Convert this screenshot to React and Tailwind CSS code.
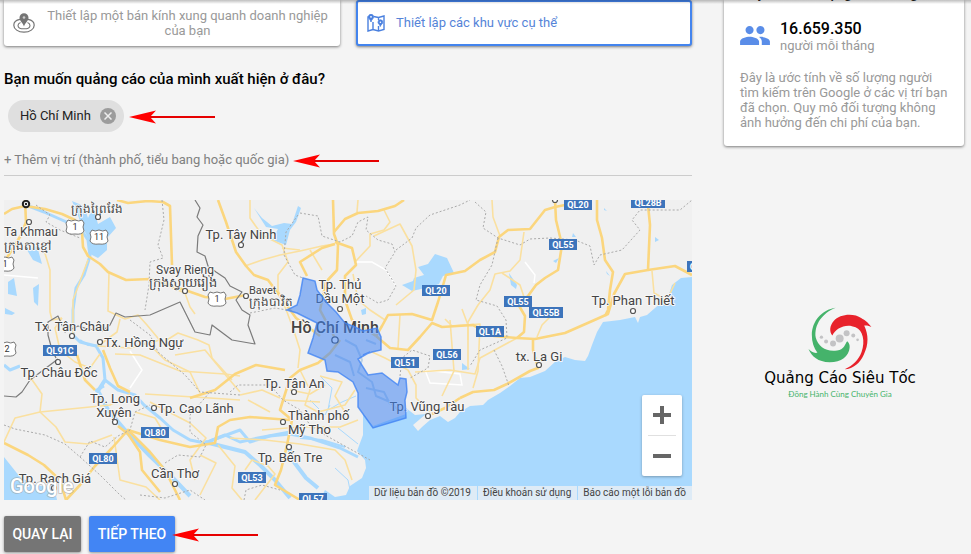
import React from 'react';

const highways = [
  'M4 214 L12 209 L25 206 L45 209 L62 214 L75 220 L82 232 L83 247 L88 256 L100 264 L108 272 L126 280 L150 279 L166 284 L185 290 L205 297 L225 299 L246 295',
  'M25 200 L26 222 L21 235 L12 250 L4 262',
  'M117 200 L128 203 L148 201 L163 202 L170 206 L172 265',
  'M218 200 L226 222 L233 243 L236 252 L246 266 L254 275 L268 280 L280 296 L296 318 L320 336',
  'M333 200 L334 234 L338 245 L337 270 L326 282 L320 310 L336 340',
  'M334 232 L345 219 L358 213 L378 211 L395 206 L404 200',
  'M335 242 L352 248 L356 265 L345 276 L345 300 L352 320 L376 336',
  'M307 276 L300 262 L322 248 L335 244',
  'M376 336 L382 326 L388 315 L412 314 L432 320 L438 302 L444 282 L446 275 L465 271 L480 260 L495 252 L499 237 L508 230 L530 229 L545 210 L555 207 L580 202',
  'M555 200 L556 220 L562 245 L558 270 L545 278 L536 285 L528 296 L518 304 L525 316 L524 332 L517 338',
  'M597 200 L597 220 L602 238 L605 260 L613 272 L610 290 L608 310 L605 316',
  'M648 205 L650 225 L648 270 L625 274 L614 294 L608 314 L590 322 L565 333 L535 339 L517 338 L494 336 L473 325 L442 327 L432 323 L420 337 L408 350 L390 348 L376 336',
  'M648 270 L675 266 L692 275',
  'M340 340 L330 353 L318 363 L300 370 L290 378 L280 410 L292 420 L287 445 L281 470 L275 485 L300 500',
  'M285 370 L256 365 L235 374 L215 390 L190 398',
  'M4 443 L28 455 L44 465 L60 480 L66 500 L80 485 L95 466 L112 448 L128 430 L150 452 L165 470 L180 500',
  'M118 426 L128 434 L140 452 L142 470 L160 492',
  'M290 420 L250 417 L230 420 L218 427 L215 443 L190 447 L160 440 L128 430',
  'M460 398 L473 392 L494 390 L507 384 L530 371 L538 368 L533 350 L533 338',
  'M460 398 L445 408 L432 414',
  'M103 350 L110 368 L118 386 L130 392',
  'M77 355 L85 380 L95 390',
];

const roads = [
  'M44 250 L50 270 L50 312 L52 320 L62 318',
  'M62 318 L55 328 L60 350 L75 362 L90 368 L100 354',
  'M109 273 L108 311 L125 319 L138 315 L147 325 L162 343 L178 333 L198 340 L209 345 L212 358 L232 380',
  'M73 336 L73 300 L88 260',
  'M166 285 L185 293 L190 307 L195 314',
  'M120 319 L117 332 L98 346 L130 348 L160 340',
  'M115 354 L140 355 L180 371 L225 374 L240 376',
  'M175 355 L205 350 L228 378 L240 392',
  'M28 374 L42 394 L40 412 L56 427 L65 442 L88 444 L112 435',
  'M4 442 L15 418 L40 412 L110 405 L130 394',
  'M145 394 L210 398 L240 400',
  'M150 402 L165 410 L190 423 L206 438 L190 460 L195 480',
  'M114 437 L120 480 L146 487 L160 500',
  'M163 431 L155 418 L135 412',
  'M218 445 L235 466 L232 488 L242 500',
  'M200 455 L216 463 L200 495',
  'M250 200 L250 218 L262 235 L282 245 L288 262 L278 275 L278 290 L287 312 L294 331 L300 350 L298 368',
  'M245 266 L262 260 L280 255 L300 251 L322 246 L334 244',
  'M282 248 L300 250',
  'M358 200 L357 212',
  'M384 210 L390 222 L384 230 L370 234 L370 246 L355 262',
  'M353 274 L358 300 L370 310 L385 320',
  'M374 236 L400 224 L412 246 L416 270 L414 290 L396 305',
  'M310 250 L322 270',
  'M372 352 L385 358 L408 370 L416 385 L416 398 L430 412',
  'M400 315 L398 348 M450 320 L454 371 L442 396',
  'M445 319 L452 326 L480 324 L478 371 L473 388',
  'M415 372 L450 370 L475 374 L480 358 L517 338',
  'M524 232 L520 260 L510 271 L495 274 L490 290 L478 305 L468 322 L468 340',
  'M502 273 L520 285 L526 303 M652 271 L654 293 L667 300 L675 283',
  'M462 309 L468 325 L468 370',
  'M550 317 L542 325 L537 337',
  'M492 200 L493 217 L500 236',
  'M300 370 L310 390 L305 405 L318 412 L345 405 L355 390',
  'M290 390 L310 394 L325 385 M284 400 L320 402',
  'M262 430 L300 427 L340 427 L358 420',
  'M230 438 L265 440 L300 444 L335 450 L345 460 L352 480',
  'M245 470 L252 460 L268 466 L275 474 L255 500',
  'M320 376 L342 382 L335 396 L345 412',
  'M240 395 L262 390 L280 398 M248 400 L270 412',
  'M150 345 L165 360 L190 372 L200 393',
];

const borders = [
  'M195 200 L200 208 L197 217 L203 225 L198 236 L197 252 L205 256 L208 266 L216 272 L225 278 L230 286 L242 292 L236 300 L242 310 L250 315 L248 325 L255 344 L232 340 L212 325 L210 335 L195 332 L180 302 L150 315 L125 317 L116 313 L110 325 L102 331 L88 329 L78 326 L65 332 L58 316 L48 322 L48 335 L52 350 L56 358',
  'M58 359 L30 380 L22 392 L16 397 L4 396',
];

const provinces = [
  'M162 200 L164 220 L158 245 L163 258 L150 262 L149 285 L145 310',
  'M4 425 L15 429 L45 435 L65 444 L80 457 L100 475 L120 495 L126 500',
  'M300 213 L318 216 L322 236 L340 242 L352 236 L358 222 L368 217 L366 230 L378 240 L392 244 L395 252 L385 268 L396 286 L388 300 L378 303 L366 296',
  'M298 215 L286 232 L284 255 L295 275 L303 278',
  'M250 313 L275 308 L287 310',
  'M396 250 L412 238 L416 228 L430 215 L460 205 L470 200',
  'M475 202 L486 212 L483 228 L498 238 L520 245 L530 239 L550 238 L575 240 L590 246 L594 265 L600 255 L622 250 L640 230 L632 220 L640 210 L680 210 L692 200',
  'M498 238 L492 265 L480 285 L476 300 L497 306 L506 320 L507 338 L480 350 L470 366',
  'M494 350 L502 366 L509 386',
  'M130 320 L150 335 L158 352 L185 375 L200 392 L240 395',
  'M80 457 L90 441 L105 447 L118 436 L130 430 L135 412 L150 405',
  'M165 463 L178 455 L200 457 L206 445 L190 432 L190 415 L210 392',
  'M230 392 L238 385 L270 385 L283 400 L300 410 L310 425 L325 435 L370 460',
  'M244 500 L246 490 L262 485 L280 490',
  'M400 376 L402 358 L412 350 L430 356 L428 368 L410 378',
  'M140 495 L165 498 L190 490 L205 500',
  'M36 205 L50 215 L46 222 L60 230 L80 238',
];

const rivers = [
  ['M26 205 L44 212 L62 220 L80 228 L88 240 L90 256 L84 275 L76 288 L73 310 L73 335 L80 342 L96 346 L103 358 L105 380 L118 390 L135 395 L144 405 L160 418 L173 430 L190 440 L205 443 L225 435 L240 442 L258 438 L290 432', 3],
  ['M105 380 L98 391 L108 410 L125 430 L150 456 L172 477 L190 496', 4],
  ['M104 386 L95 391', 3],
  ['M205 442 L225 447 L245 452 L260 465 L275 480 L290 498', 4],
  ['M210 441 L240 430 L250 442 L270 436 L290 434 L310 438 L340 448 L358 457', 3],
  ['M288 445 L294 462 L306 478 L318 488', 4],
  ['M300 438 L322 440 L345 447', 2],
  ['M320 376 L332 388 L328 410 L342 402 L356 396', 1],
  ['M310 400 L325 415 L330 405 M338 428 L358 444', 1],
  ['M335 468 L348 480 L350 490', 1],
  ['M80 340 L88 345 L102 346', 2],
  ['M4 365 L10 370 L20 366', 3],
];

const labels = [
  [71, 213, 'ក្រុងព្រៃវែង', 12, 'start'],
  [4, 236, 'Ta Khmau', 12, 'start'],
  [4, 250, 'ក្រុងតាខ្មៅ', 12, 'start'],
  [156, 274, 'Svay Rieng', 12, 'start'],
  [149, 287, 'ក្រុងស្វាយរៀង', 13, 'start'],
  [249, 294, 'Bavet', 11, 'start'],
  [249, 306, 'ក្រុងបាវិត', 12, 'start'],
  [241, 239, 'Tp. Tây Ninh', 13, 'middle'],
  [340, 289, 'Tp. Thủ', 13, 'middle'],
  [340, 303, 'Dầu Một', 13, 'middle'],
  [335, 333, 'Hồ Chí Minh', 16, 'middle'],
  [72, 331, 'Tx. Tân Châu', 13, 'middle'],
  [104, 347, 'Tx. Hồng Ngự', 13, 'start'],
  [59, 377, 'Tp. Châu Đốc', 13, 'middle'],
  [115, 403, 'Tp. Long', 13, 'middle'],
  [114, 417, 'Xuyên', 13, 'middle'],
  [158, 413, 'Tp. Cao Lãnh', 13, 'start'],
  [175, 478, 'Cần Thơ', 13, 'middle'],
  [55, 483, 'Tp. Rạch Giá', 13, 'middle'],
  [294, 388, 'Tp. Tân An', 13, 'middle'],
  [288, 420, 'Thành phố', 13, 'start'],
  [288, 434, 'Mỹ Tho', 13, 'start'],
  [290, 462, 'Tp. Bến Tre', 13, 'middle'],
  [427, 411, 'Tp. Vũng Tàu', 13, 'middle'],
  [539, 361, 'tx. La Gi', 13, 'middle'],
  [633, 305, 'Tp. Phan Thiết', 13, 'middle'],
];

const towns = [
  [29, 222], [98, 217], [185, 291], [246, 296], [241, 245], [340, 309], [335, 340],
  [72, 336], [100, 342], [58, 362], [115, 422], [154, 408], [175, 484], [54, 488], [294, 392],
  [283, 422], [289, 447], [428, 416], [539, 365], [633, 311], [555, 200],
];

const shields = [
  [60, 351, 34, 'QL91C'], [155, 433, 28, 'QL80'], [103, 459, 28, 'QL80'],
  [252, 478, 28, 'QL53'], [313, 499, 28, 'QL57'], [405, 363, 28, 'QL51'],
  [447, 355, 28, 'QL56'], [436, 291, 28, 'QL20'], [578, 205, 28, 'QL20'],
  [648, 203, 34, 'QL28B'], [563, 245, 28, 'QL55'], [518, 302, 28, 'QL55'],
  [546, 313, 34, 'QL55B'], [490, 332, 28, 'QL1A'], [701, 267, 28, 'QL1A'],
];

const routeMarkers = [[75, 227, '1'], [99, 237, '11'], [217, 299, '1'], [5, 264, '1'], [7, 349, '2']];

function RegionMap() {
  return (
    <svg
      role="img"
      aria-label="Bản đồ"
      viewBox="4 200 688 300"
      preserveAspectRatio="xMinYMid slice"
      className="block h-full w-full font-[Roboto,'Noto_Sans',sans-serif]"
    >
      <rect x="4" y="200" width="1400" height="300" fill="#f0f0f0" />
      <g fill="#a9d9fe">
        <path d="M692 277 L681 278 L672 285 L668 297 L655 308 L647 315 L640 317 L638 323 L635 317 L620 320 L603 322 L597 332 L592 345 L588 356 L585 361 L575 360 L565 357 L556 361 L545 371 L530 377 L520 378 L510 386 L500 393 L488 400 L483 405 L470 406 L460 412 L455 418 L448 422 L440 416 L430 420 L422 427 L418 431 L413 425 L426 414 L415 415 L406 408 L400 395 L380 390 L358 392 L363 410 L363 435 L357 451 L365 460 L366 468 L362 478 L350 486 L346 495 L335 497 L325 490 L320 500 H1400 V277 Z" />
        <path d="M4 457 L12 467 L20 477 L35 485 L50 487 L56 495 L57 500 H4 Z" />
        <path d="M72 201 L84 206 L88 218 L93 207 L98 224 L110 217 L116 228 L107 238 L107 250 L98 258 L90 254 L89 240 L83 228 Z" />
        <path d="M27 250 L37 246 L42 264 L33 260 Z M8 282 L14 278 L17 296 L8 294 Z M33 288 L39 284 L38 306 L34 302 Z M5 308 L15 313 L12 315 L5 314 Z" />
        <path d="M254 208 L262 218 L272 226 L284 223 L292 224 L298 206 L301 208 L296 222 L290 230 L286 245 L272 240 L278 229 L266 227 Z" />
        <path d="M402 285 L413 281 L414 278 L424 275 L418 267 L428 264 L435 254 L447 258 L454 273 L443 276 L439 284 L430 287 L412 291 Z" />
        <path d="M509 273 L517 285 L516 289 L511 285 Z M361 310 L366 308 L366 314 L362 315 Z M573 233 L576 237 L572 237 Z M553 261 L559 258 L556 263 Z M655 237 L659 240 L655 242 Z M462 363 L470 369 L462 370 Z M604 208 L607 211 L604 210 Z M606 271 L610 276 L607 274 Z" />
      </g>
      <path d="M356 386 L368 375 L406 379 L406 414 L373 426 L358 407 Z" fill="#f0f0f0" />
      <g fill="none" stroke="#fff" strokeWidth="1.5">
        <path d="M4 275 L38 278 M355 262 L372 262 L386 270 L396 286 M525 262 L535 275 L534 283 M130 351 L142 370 L130 388 M425 370 L460 374 L462 385 L430 383 Z" />
      </g>
      <g fill="none" stroke="#a9d9fe" strokeLinejoin="round">
        {rivers.map(([d, w], i) => <path key={i} d={d} strokeWidth={w} />)}
      </g>
      <g fill="none" stroke="#b9d0e6" strokeWidth="2" strokeLinejoin="round">
        <path d="M345 340 L356 346 L362 360 L358 372 L372 382 L376 396 L390 402 L398 410 M366 340 L376 344 M335 355 L350 362 L354 376 M366 388 L384 392 L390 404" />
      </g>
      <g fill="none" stroke="#fae0a0" strokeWidth="1.6" strokeLinejoin="round">
        {roads.map((d, i) => <path key={i} d={d} />)}
      </g>
      <g fill="none" stroke="#fbd67e" strokeWidth="2.6" strokeLinejoin="round">
        {highways.map((d, i) => <path key={i} d={d} />)}
      </g>
      <g fill="none" stroke="#aaa" strokeWidth="1" strokeDasharray="2 2">
        {provinces.map((d, i) => <path key={i} d={d} />)}
      </g>
      <g fill="none" stroke="#7b7b7b" strokeWidth="1.2" strokeLinejoin="round">
        {borders.map((d, i) => <path key={i} d={d} />)}
      </g>
      <g fill="#444" stroke="#f7f7f7" strokeWidth="2" paintOrder="stroke" strokeLinejoin="round">
        {labels.map(([x, y, text, size, anchor]) => (
          <text key={`${text}${y}`} x={x} y={y} fontSize={size} textAnchor={anchor} fontWeight={size === 16 ? 500 : 400}>{text}</text>
        ))}
      </g>
      <g fill="#fff" stroke="#555" strokeWidth="1.2">
        {towns.map(([x, y]) => <circle key={`${x}-${y}`} cx={x} cy={y} r="2.5" />)}
      </g>
      <circle cx="335" cy="340" r="3.2" fill="#fff" stroke="#444" strokeWidth="1.3" />
      <circle cx="26" cy="204" r="3.2" fill="#fff" stroke="#222" strokeWidth="2" />
      <circle cx="26" cy="204" r="1.2" fill="#222" />
      {routeMarkers.map(([x, y, text]) => (
        <g key={`${x}-${y}`}>
          <path
            transform={`translate(${x} ${y})`}
            d="M-7 -7 Q-4 -5 0 -7 Q4 -5 7 -7 L9 -4 Q7 0 9 4 Q7 8 0 7 Q-7 8 -9 4 Q-7 0 -9 -4 Z"
            fill="#fff" stroke="#777"
          />
          <text x={x} y={y + 3} fontSize="9" fill="#333" textAnchor="middle">{text}</text>
        </g>
      ))}
      {shields.map(([x, y, w, text]) => (
        <g key={`${x}-${y}`}>
          <rect x={x - w / 2} y={y - 6} width={w} height="11" fill="#3d74bb" />
          <text x={x} y={y + 3} fontSize="9" fontWeight="700" fill="#fff" textAnchor="middle">{text}</text>
        </g>
      ))}
      <path
        d="M303 278 L315 281 L317 290 L327 303 L336 312 L345 323 L355 327 L363 331 L377 328 L381 337 L381 350 L372 352 L363 355 L370 352 L358 359 L368 375 L382 373 L398 385 L400 378 L406 379 L407 392 L405 400 L406 418 L373 428 L358 407 L358 393 L353 382 L338 372 L327 371 L325 360 L308 353 L313 338 L317 323 L297 313 L287 310 L297 305 L300 295 Z"
        fill="#4285f4" fillOpacity="0.55" stroke="#4285f4" strokeOpacity="0.8" strokeWidth="1.5"
      />
      <text x="10" y="493" fontSize="20" fontWeight="500" fill="#fff" stroke="#999" strokeOpacity="0.6" strokeWidth="1.5" paintOrder="stroke">Google</text>
    </svg>
  );
}

function RedArrow({ className = '' }) {
  return (
    <svg viewBox="0 -2 86 16" className={`h-4 w-[86px] shrink-0 ${className}`} aria-hidden="true">
      <path d="M20 7 H86" stroke="#e60000" strokeWidth="2" />
      <path d="M0 7 L27 0.500 L21 7 L27 13.500 Z" fill="#ff0000" />
    </svg>
  );
}

function RadiusIcon() {
  return (
    <svg viewBox="0 0 22 20" className="h-5 w-[22px] shrink-0" fill="none" stroke="#757575" aria-hidden="true">
      <path d="M7 6.3 C3 7 0.8 9.5 0.8 12.2 C0.8 16 5 19.2 11 19.2 S21.200 16 21.200 12.200 C21.200 9.500 19 7 15 6.300" strokeWidth="1.200" />
      <path d="M7.500 9.500 C5.700 10.200 5 11.300 5 12.400 C5 14.400 7.500 15.800 11 15.800 S17 14.400 17 12.400 C17 11.300 16.300 10.200 14.500 9.500" strokeWidth="1.100" />
      <path d="M11 13.500 C10 10 6.500 8 6.500 4.800 A4.500 4.500 0 0 1 15.500 4.800 C15.500 8 12 10 11 13.500 Z" fill="#757575" stroke="none" />
      <circle cx="11" cy="4.500" r="1.300" fill="#ccc" stroke="none" />
    </svg>
  );
}

function MapPinsIcon() {
  return (
    <svg viewBox="0 0 18 18" className="h-[18px] w-[18px] shrink-0" fill="none" stroke="#4a80df" strokeWidth="1.400" aria-hidden="true">
      <path d="M2 3 H1 V17 L6 15.500 L11.500 17 L17 15.500 V2 L11.500 3.500 L6.500 2.500 M6 8 V15.500 M11.500 3.500 V6 M11.500 12 V17" />
      <path d="M4 8 C3.500 5.500 1.500 5 1.500 2.800 A2.500 2.500 0 0 1 6.500 2.800 C6.500 5 4.500 5.500 4 8 Z M13.300 12.500 C13 10.500 11 10 11 8.200 A2.400 2.400 0 0 1 15.800 8.200 C15.800 10 13.800 10.500 13.300 12.500 Z" fill="#4a80df" strokeWidth="0.800" />
      <circle cx="4" cy="2.800" r="0.900" fill="#fff" stroke="none" />
      <circle cx="13.400" cy="8.200" r="0.800" fill="#fff" stroke="none" />
    </svg>
  );
}

function PeopleIcon() {
  return (
    <svg viewBox="1 5 22 14" className="mt-[6px] h-[19px] w-[30px] shrink-0" fill="#5a8de8" aria-hidden="true">
      <path d="M16 11c1.660 0 2.990-1.340 2.990-3S17.660 5 16 5c-1.660 0-3 1.340-3 3s1.340 3 3 3zm-8 0c1.660 0 2.990-1.340 2.990-3S9.660 5 8 5C6.340 5 5 6.340 5 8s1.340 3 3 3zm0 2c-2.330 0-7 1.170-7 3.500V19h14v-2.500c0-2.330-4.670-3.500-7-3.500zm8 0c-.290 0-.620.020-.970.050 1.160.840 1.970 1.970 1.970 3.450V19h6v-2.500c0-2.330-4.670-3.500-7-3.500z" />
    </svg>
  );
}

function AgencyLogo() {
  return (
    <div className="flex flex-col items-center whitespace-nowrap">
      <svg viewBox="175 52 192 190" className="h-[63px] w-16" aria-hidden="true">
        <path d="M258 54 C215 60 187 95 186 135 C186 158 192 176 203 190 C192 192 184 187 176 179 C186 202 204 218 240 219 C275 219 298 200 300 175 C301 166 298 160 293 155 C285 163 286 180 262 183 C230 188 205 172 198 145 C192 105 218 70 258 54 Z" fill="#45b36b" />
        <path d="M248 138 C238 125 240 108 252 94 C270 73 312 69 336 86 C344 91 354 96 366 113 C360 109 352 107 344 108 C357 135 358 165 343 195 C332 220 312 238 285 240 C310 229 327 212 336 188 C348 155 340 122 318 113 C290 100 258 115 248 138 Z" fill="#e8222b" />
        <g fill="#c3c3c5">
          <circle cx="215" cy="143" r="5" />
          <circle cx="229" cy="156" r="6" />
          <circle cx="250" cy="162" r="9" />
          <circle cx="270" cy="147" r="12" />
          <circle cx="291" cy="131" r="9" />
          <circle cx="311" cy="138" r="6" />
          <circle cx="324" cy="151" r="4" />
        </g>
      </svg>
      <p className="font-['DejaVu_Sans',sans-serif] text-[15px] leading-4 text-black">Quảng Cáo Siêu Tốc</p>
      <p className="mt-[2px] font-[Lato,sans-serif] text-[8px] leading-3 text-[#45b36b]">Đồng Hành Cùng Chuyên Gia</p>
    </div>
  );
}

export default function App() {
  return (
    <div className="relative min-h-screen overflow-hidden bg-[#f4f4f4] pr-[7px] pl-1 font-[Roboto,sans-serif] text-[13px] text-[#222]">
      <div className="absolute inset-x-0 top-0 z-10 h-1 bg-gradient-to-b from-black/25 to-transparent" />
      <div className="grid grid-cols-[minmax(0,1fr)_240px] gap-8">
        <main>
          <div className="grid grid-cols-2 gap-4">
            <button type="button" className="flex h-[46px] items-center gap-2 rounded-b-[3px] bg-white pr-2 pl-[9px] text-[#999] shadow-[0_1px_3px_rgba(0,0,0,0.5)]">
              <RadiusIcon />
              <span className="flex-1 text-center leading-[15px]">Thiết lập một bán kính xung quanh doanh nghiệp của bạn</span>
            </button>
            <button type="button" className="flex h-[46px] items-center gap-[11px] rounded-[3px] border-2 border-[#4384ee] bg-white px-[9px] text-[#5584d8] shadow-[0_1px_3px_rgba(0,0,0,0.5)]">
              <MapPinsIcon />
              <span>Thiết lập các khu vực cụ thể</span>
            </button>
          </div>

          <h2 className="mt-[21px] text-[15px] leading-6 font-medium text-black">Bạn muốn quảng cáo của mình xuất hiện ở đâu?</h2>

          <div className="mt-[9px] flex items-center gap-[5px] pl-1">
            <div className="flex h-8 items-center gap-[9px] rounded-full bg-[#dfdfdf] pr-2 pl-3">
              <span>Hồ Chí Minh</span>
              <button type="button" aria-label="Xóa Hồ Chí Minh" className="flex h-4 w-4 items-center justify-center rounded-full bg-[#9c9c9c]">
                <svg viewBox="0 0 8 8" className="h-2 w-2" stroke="#eee" strokeWidth="1.500" aria-hidden="true"><path d="M0.500 0.500 L7.500 7.500 M7.500 0.500 L0.500 7.500" /></svg>
              </button>
            </div>
            <RedArrow />
          </div>

          <div className="mt-3 flex h-8 items-center border-b border-[#ccc]">
            <input
              type="text"
              aria-label="Thêm vị trí"
              placeholder="+ Thêm vị trí (thành phố, tiểu bang hoặc quốc gia)"
              className="w-[289px] bg-transparent outline-none placeholder:text-[#808080]"
            />
            <RedArrow />
          </div>

          <section className="relative mt-6 h-[300px] overflow-hidden">
            <RegionMap />
            <div className="absolute right-[10px] bottom-6 w-10 rounded-[2px] bg-white shadow-[0_1px_3px_rgba(0,0,0,0.3)]">
              <button type="button" aria-label="Phóng to" className="flex h-10 w-full items-center justify-center">
                <svg viewBox="0 0 18 18" className="h-[18px] w-[18px]" fill="#666" aria-hidden="true"><path d="M7 0 H11 V7 H18 V11 H11 V18 H7 V11 H0 V7 H7 Z" /></svg>
              </button>
              <div className="mx-[6px] h-px bg-[#e0e0e0]" />
              <button type="button" aria-label="Thu nhỏ" className="flex h-10 w-full items-center justify-center">
                <svg viewBox="0 0 18 4" className="h-1 w-[18px]" fill="#666" aria-hidden="true"><path d="M0 0 H18 V4 H0 Z" /></svg>
              </button>
            </div>
            <div className="absolute right-0 bottom-0 flex h-[14px] divide-x divide-[#a9d9fe] bg-[#deebf6] text-[10px] leading-[14px] text-[#444]">
              <span className="pr-[6px] pl-[5px]">Dữ liệu bản đồ ©2019</span>
              <a href="#terms" className="pr-[6px] pl-[5px]">Điều khoản sử dụng</a>
              <a href="#report" className="pr-[6px] pl-[5px]">Báo cáo một lỗi bản đồ</a>
            </div>
          </section>

          <div className="mt-4 flex items-center text-[14px] font-medium whitespace-nowrap text-white">
            <button type="button" className="h-9 min-w-[77px] rounded-[2px] bg-[#757575] px-2 shadow-[0_1px_3px_rgba(0,0,0,0.4)]">QUAY LẠI</button>
            <button type="button" className="ml-2 h-9 min-w-[86px] rounded-[2px] bg-[#4285f4] px-2 shadow-[0_1px_3px_rgba(0,0,0,0.4)]">TIẾP THEO</button>
            <RedArrow className="-ml-[3px]" />
          </div>
        </main>

        <aside>
          <div className="h-[146px] overflow-hidden rounded-b-[3px] bg-white px-4 shadow-[0_1px_3px_rgba(0,0,0,0.5)]">
            <h3 className="-mt-[17px] text-[14px] leading-5 font-medium whitespace-nowrap text-[#222]">Quy mô đối tượng tiềm năng</h3>
            <div className="mt-[17px] flex gap-[10px]">
              <PeopleIcon />
              <div>
                <p className="text-[16px] leading-[18px] font-medium text-black">16.659.350</p>
                <p className="leading-4 text-[#999]">người mỗi tháng</p>
              </div>
            </div>
            <p className="mt-4 -mr-1 leading-[15px] text-[#999]">
              Đây là ước tính về số lượng người tìm kiếm trên Google ở các vị trí bạn đã chọn. Quy mô đối tượng không ảnh hưởng đến chi phí của bạn.
            </p>
          </div>
          <div className="mt-[161px] pr-2">
            <AgencyLogo />
          </div>
        </aside>
      </div>
    </div>
  );
}
